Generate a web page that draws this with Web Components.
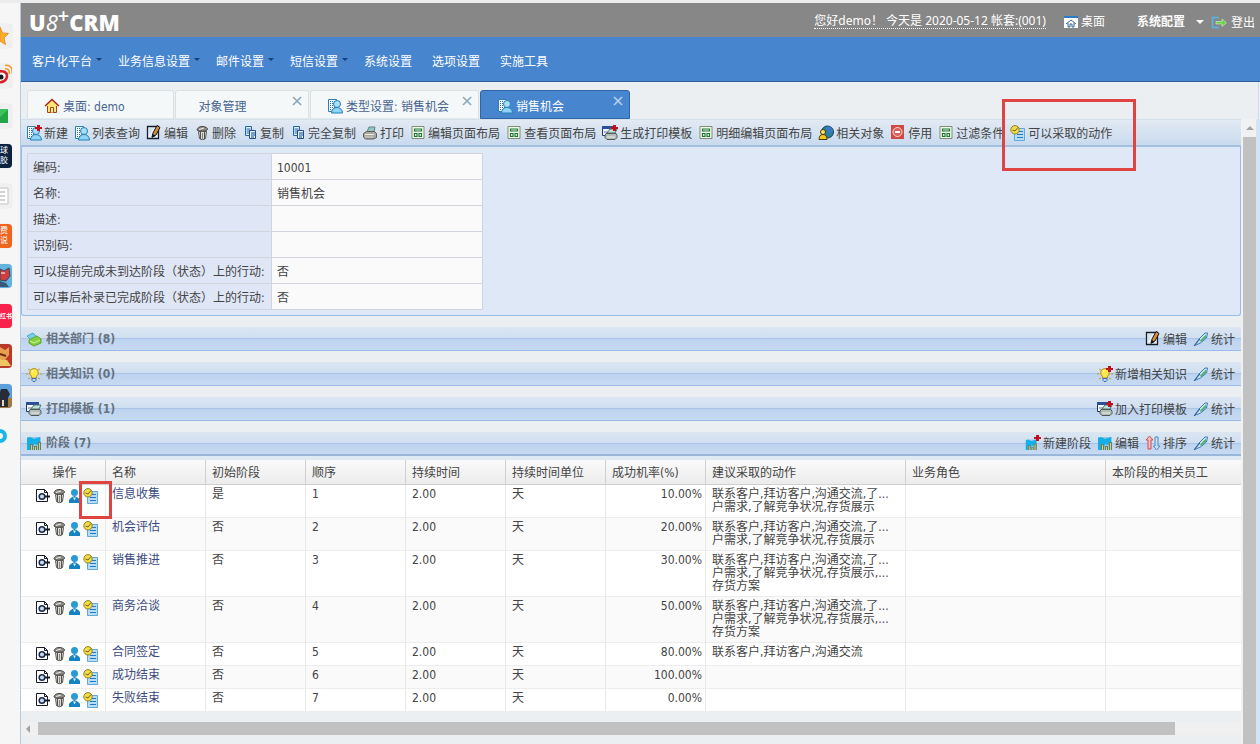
<!DOCTYPE html>
<html lang="zh-CN">
<head>
<meta charset="utf-8">
<title>U8+ CRM - 销售机会</title>
<style>
  html { background: #fff; }
  body {
    margin: 0;
    color: #444;
    font: 12px/16px "DejaVu Sans Condensed", "Noto Sans CJK SC", "Liberation Sans", sans-serif;
  }
</style>
</head>
<body>
<crm-app>
  <side-dock slot="dock"></side-dock>
  <crm-header slot="top"></crm-header>
  <crm-nav slot="top"></crm-nav>
  <crm-tabs slot="top"></crm-tabs>

  <tool-bar>
    <tool-item icon="new">新建</tool-item>
    <tool-item icon="list">列表查询</tool-item>
    <tool-item icon="edit">编辑</tool-item>
    <tool-item icon="trash">删除</tool-item>
    <tool-item icon="copy">复制</tool-item>
    <tool-item icon="copy">完全复制</tool-item>
    <tool-item icon="print">打印</tool-item>
    <tool-item icon="layout">编辑页面布局</tool-item>
    <tool-item icon="layout">查看页面布局</tool-item>
    <tool-item icon="tplnew">生成打印模板</tool-item>
    <tool-item icon="layout">明细编辑页面布局</tool-item>
    <tool-item icon="related">相关对象</tool-item>
    <tool-item icon="stop">停用</tool-item>
    <tool-item icon="layout">过滤条件</tool-item>
    <tool-item icon="action" marked>可以采取的动作</tool-item>
  </tool-bar>
  <detail-panel></detail-panel>
  <section-bar icon="dept" label="相关部门 (8)">
    <tool-item icon="edit">编辑</tool-item>
    <tool-item icon="pen">统计</tool-item>
  </section-bar>
  <section-bar icon="bulb" label="相关知识 (0)">
    <tool-item icon="bulbnew">新增相关知识</tool-item>
    <tool-item icon="pen">统计</tool-item>
  </section-bar>
  <section-bar icon="tpl" label="打印模板 (1)">
    <tool-item icon="tplnew">加入打印模板</tool-item>
    <tool-item icon="pen">统计</tool-item>
  </section-bar>
  <section-bar icon="chart" label="阶段 (7)" open>
    <tool-item icon="chartnew">新建阶段</tool-item>
    <tool-item icon="chart">编辑</tool-item>
    <tool-item icon="sort">排序</tool-item>
    <tool-item icon="pen">统计</tool-item>
  </section-bar>
  <stage-grid></stage-grid>
  <h-scroll></h-scroll>
</crm-app>

<script>
const building = `<path d="M1.500 1.500h8v12h-8z" fill="#f4fafd" stroke="#2f7db5"/><path d="M3.500 3v9M5.500 3v9M7.500 3v9" stroke="#2f6d9d" stroke-dasharray="1 1"/>`;
const person = `<path d="M4.500 15c0-3 2-5.500 5.500-5.500s5.500 2.500 5.500 5.500z" fill="#8fd4f4" stroke="#2480ba"/><circle cx="10" cy="6" r="3.500" fill="#a8def6" stroke="#2480ba"/>`;
const plus = `<path d="M11 0h3v2h2v2h-2v2h-3V4H9V2h2z" fill="#c01020"/>`;
const printer = `<path d="M5 8l3-4h7l-2 4z" fill="#b9e4d8" stroke="#52716e"/><path d="M4 8.500h10l1 2v2l-2 2H5l-2-2v-2z" fill="#b4bcb8" stroke="#505956"/><path d="M5 12h8" stroke="#e8efec"/>`;
const windowShape = `<path d="M.5 1.500h12v9H.5z" fill="#f2f5f8" stroke="#1d3566"/><path d="M0 1h13v3H0z" fill="#2c4f9c"/><path d="M2 7h4" stroke="#6a7b98"/>`;
const bulb = `<path d="M0 8h2M14 8h2M2 3l2 1M14 3l-2 1M2 13l2-1M14 13l-2-1" stroke="#c79a28"/><path d="M8 2.500a4.300 4.300 0 0 0-2.500 7.800V12h5v-1.700A4.300 4.300 0 0 0 8 2.500z" fill="#ffe84a" stroke="#b48a15"/><path d="M6 12.500h4v2l-1 1H7l-1-1z" fill="#bcd9f4" stroke="#3b6cb5"/><path d="M7 4.500L6 6" stroke="#fff"/>`;
const chart = `<path d="M1 2h14v13H1z" fill="#8fc6e6"/><path d="M1 3l3-1 4 2 6-2v6l-3 2-3-1-2 6H1z" fill="#14aee8"/><path d="M4 9h3v6H4zM8 11h3v4H8zM12 7h3v8h-3z" fill="#6f7c58"/><path d="M5.500 10v5M9.500 12v3M13.500 8v7" stroke="#cfd07a"/>`;
const ICONS = {
  new: building + person + plus,
  list: building + person,
  edit: `<path d="M1.500 1.500h11v12h-11z" fill="#e8f2fa" stroke="#151f2b" stroke-width="1.300"/><path d="M3 4h4M3 6h3M3 8h2" stroke="#c5d2dc"/><path d="M6 12l1-4 4-7.500 3 2L10 10z" fill="#d58a3c" stroke="#16181a"/><path d="M5.500 13l1.500-4 2.500 2z" fill="#111"/>`,
  trash: `<path d="M3 5c0-2 3-4 6-3.500S14 3 13.500 4.500 5 7 3 5z" fill="#8e8c86" stroke="#494743"/><path d="M4.500 6.500h8l-1 7c-2 1.500-4 1.500-6 0z" fill="#dddbd5" stroke="#5a5854"/><path d="M6.500 7v7M10.500 7v7" stroke="#55534e"/><path d="M8.500 8v6" stroke="#8b8983"/><path d="M5 4.500l5-1.500" stroke="#eee"/>`,
  copy: `<path d="M3.500 1.500h6v9h-6z" fill="#e4f0fa" stroke="#2463a6"/><path d="M4.500 4h4M4.500 6h4M4.500 8h3" stroke="#2463a6"/><path d="M7.500 5.500h6v8h-6z" fill="#e4f0fa" stroke="#1d4f8c"/><path d="M9 8h4M9 10h4M9 12h3" stroke="#1d4f8c"/>`,
  print: `<path d="M5 7l2-5h6l-1 5z" fill="#8ec8c2" stroke="#6b807e"/><path d="M1.500 8.500l3-2h8l2 2v4l-3 1.500H3.500l-2-2z" fill="#a9a79e" stroke="#5c5b55"/><path d="M3 9.500h9" stroke="#efeee8"/><path d="M3 12h8" stroke="#d5d4cd"/>`,
  layout: `<path d="M2 1.500h12v12H2z" fill="#f4f8ea" stroke="#7d8f78"/><path d="M4.500 4h7v2h-7zM4.500 8.500h2.500v3h-2.500zM9 8.500h2.500v3H9z" fill="#e3f2d4" stroke="#1f7a3a" stroke-width="1.200"/>`,
  tpl: windowShape + printer,
  tplnew: windowShape + printer + plus,
  related: `<circle cx="9.500" cy="7" r="6" fill="#2a7f9a" stroke="#123d5c"/><path d="M10 1c4 1 5 4 5 6l-4 1-3-4z" fill="#3f78c8"/><circle cx="5" cy="7" r="2.500" fill="#ffe169" stroke="#493b0a"/><path d="M1 14.500c0-3 1-5 4-5s4 2 4 5z" fill="#f9c51f" stroke="#493b0a"/>`,
  stop: `<path d="M1 0h13v14H1z" fill="#cf4a44"/><circle cx="7.500" cy="7" r="4.500" fill="#d9625a" stroke="#f7dcd9"/><path d="M5 7h5" stroke="#fff" stroke-width="2"/>`,
  action: `<path d="M4.500 3.500h10v12h-10z" fill="#b5ddf8" stroke="#62a8da"/><path d="M9 6.500h4M7 9.500h6M7 12.500h6" stroke="#2478bd"/><circle cx="5" cy="4.800" r="4.200" fill="#f3dc46" stroke="#8d7f28"/><path d="M2.500 5l2.500 1 3-3.500" fill="none" stroke="#6f6418"/>`,
  dept: `<path d="M1 5l6-3 4 4-5 4z" fill="#79cfe6" stroke="#58a9c0"/><path d="M3 9l8-4 4 3v4l-7 3-5-3z" fill="#84d03d" stroke="#5ca32a"/><path d="M4 10l4 2 6-3" stroke="#d4f09e"/>`,
  bulb: bulb,
  bulbnew: bulb + plus,
  chart: chart,
  chartnew: `<g transform="translate(0 3) scale(.8)">${chart}</g>` + plus,
  pen: `<path d="M1.500 14.500L6 8l6-6 2.500 0-1 5-6 5z" fill="#cfe9e4" stroke="#3f78b8"/><path d="M7 9.500l6-6v3l-5 5z" fill="#55ad80"/><path d="M1 15l6-7" stroke="#26599c"/>`,
  sort: `<path d="M4.500 1L8 5H6v9H3V5H1z" fill="#f6bcbc" stroke="#cf4d55"/><path d="M11.500 15L8.500 11H10V2h3v9h2z" fill="#c6dff3" stroke="#4f8cc0"/>`,
  view: `<path d="M1.500 1.500h8l3 3v9h-11z" fill="#fff" stroke="#151b28"/><path d="M9.500 1.500v3h3" fill="none" stroke="#151b28"/><circle cx="7" cy="8.500" r="2.800" fill="#c4ddf6" stroke="#1d2848" stroke-width="1.500"/><path d="M10 8.500h5" stroke="#151b28" stroke-width="2"/>`,
  user: `<circle cx="7.500" cy="4.500" r="3.500" fill="#2a9ad6"/><path d="M2 15v-3c1-2 3-3 5.500-4 2.500 1 4.500 2 5.500 4v3z" fill="#1583c3"/><path d="M6 9.500h3l-1.500 3z" fill="#d8f0fc"/>`,
  home: `<path d="M3.500 8v6.500h9V8" fill="#ffe375" stroke="#a04414"/><path d="M1 8l7-6.500L15 8" fill="#ffe375" stroke="#a3271a" stroke-width="1.500"/><path d="M6.500 14.500v-5h3v5" fill="#fff3b5" stroke="#a04414"/>`,
  desk: `<path d="M1 2h14v12H1z" fill="#fff"/><path d="M1 2h14v2H1z" fill="#2d7bc4"/><path d="M3 10l5-4 5 4M5 9v4h2v-3h2v3h2V9" fill="none" stroke="#33679c"/>`,
  exit: `<path d="M8 2.500H1.500v10H8" fill="none" stroke="#55b7e8" stroke-width="1.500"/><path d="M5 6.500h6V4l4.500 3.800L11 11.500V9H5z" fill="#6fd24a" stroke="#e7ffe0" stroke-width=".5"/>`,
  star: `<path d="M0 3l2.500 6 6 .5-4.500 4.500 1.500 6.500L0 17z" fill="#fcae2c" stroke="#ef9120"/>`,
  weibo: `<path d="M-2 8c5-2 9 0 9 4s-4 7-9 6" fill="#fff" stroke="#d8232a" stroke-width="2.500"/><circle cx="1" cy="13" r="2.500" fill="#181818"/><path d="M5 5c3-1 5 2 4 5M5 1.500c5-1 8 3 7 8" fill="none" stroke="#f09a2c" stroke-width="1.500"/>`,
  mail: `<path d="M0 5h8v14H0z" fill="#3fc25c"/><path d="M0 13l8-7v13H0z" fill="#26a548"/>`,
  doc: `<path d="M-1 4h9v16h-9z" fill="#fff" stroke="#c4c4c4"/><path d="M0 8h5M0 12h5M0 16h5" stroke="#a8a8a8"/>`,
  robot: `<path d="M0 0h12v24H0z" fill="#62b4de"/><path d="M0 5l4 2 5-3 1 8-4 5-6-1z" fill="#cf3e40" stroke="#30485a"/><path d="M0 17l6 2 3 4H0z" fill="#385a78"/><path d="M1 9h4" stroke="#fff"/>`,
  clash: `<path d="M0 0h12v24H0z" fill="#b9392a"/><path d="M0 3l5 3 4-3v8l-4 5-5-1z" fill="#e9a04c"/><path d="M0 15l7 1 4 6H0z" fill="#edc562"/><path d="M0 10l6 2" stroke="#6e2a18" stroke-width="2"/>`,
  hero: `<path d="M0 0h12v24H0z" fill="#5aa0dc"/><path d="M0 14h12v10H0z" fill="#a27b3e"/><path d="M1 5h6l3 5-2 4v9H0V8z" fill="#282c38"/><path d="M3 16v6" stroke="#e8d7b0" stroke-width="2"/>`,
  ring: `<path d="M0 7a5 5 0 0 1 0 10" fill="none" stroke="#19b7e8" stroke-width="4"/>`
};

function define(name, render) {
  customElements.define(name, class extends HTMLElement {
    constructor() { super(); this.attachShadow({ mode: "open" }); }
    connectedCallback() {
      const template = document.createElement("template");
      template.innerHTML = render(this);
      this.shadowRoot.replaceChildren(template.content.cloneNode(true));
    }
  });
}

define("crm-icon", el => {
  const tall = el.hasAttribute("tall");
  const w = tall ? 12 : 16, h = tall ? 24 : 16;
  return `<style>:host{display:block;flex:none;width:${w}px;height:${h}px}svg{display:block}</style>
  <svg width="${w}" height="${h}" viewBox="0 0 ${w} ${h}" fill="none" aria-hidden="true">${ICONS[el.getAttribute("name")]}</svg>`;
});

define("crm-app", () => `<style>
  :host{display:grid;grid-template-columns:20px minmax(0,1fr);min-height:100vh;box-sizing:border-box;border-top:3px solid #ececec;background:#f6f6f6}
  main{display:flex;flex-direction:column;border-left:1px solid #b5c8dc;background:#ebeff2;min-width:0}
  .body{flex:1;display:flex;min-width:0}
  .content{flex:1;min-width:0}
</style>
<slot name="dock"></slot>
<main>
  <slot name="top"></slot>
  <div class="body">
    <div class="content"><slot></slot></div>
    <v-scroll></v-scroll>
  </div>
</main>`);

define("side-dock", () => `<style>
  :host{display:flex;flex-direction:column;gap:16px;padding-top:21px;box-sizing:border-box}
  .tile{width:12px;height:24px;border-radius:0 4px 4px 0;overflow:hidden;background:#f0f0f0;box-shadow:0 0 1px #ccc;
    display:flex;flex-direction:column;justify-content:center;color:#fff;font-size:8px;line-height:10px;white-space:nowrap}
  .navy{background:#0d2342}.orange{background:#f1641e}.red{background:#f7234a;font-size:6px;font-weight:bold}
  .bare{background:none;box-shadow:none}
</style>
<div class="tile"><crm-icon name="star" tall></crm-icon></div>
<div class="tile"><crm-icon name="weibo" tall></crm-icon></div>
<div class="tile"><crm-icon name="mail" tall></crm-icon></div>
<div class="tile navy"><span>球</span><span>胶</span></div>
<div class="tile"><crm-icon name="doc" tall></crm-icon></div>
<div class="tile orange"><span>费</span><span>说</span></div>
<div class="tile"><crm-icon name="robot" tall></crm-icon></div>
<div class="tile red"><span>红书</span></div>
<div class="tile"><crm-icon name="clash" tall></crm-icon></div>
<div class="tile"><crm-icon name="hero" tall></crm-icon></div>
<div class="tile bare"><crm-icon name="ring" tall></crm-icon></div>`);

define("crm-header", () => `<style>
  :host{display:flex;align-items:center;box-sizing:border-box;height:34px;background:#878787;color:#fff;padding:3px 5px 0 8px;white-space:nowrap}
  .logo{flex:1;display:flex;font:800 22px/24px "Open Sans","Noto Sans",sans-serif}
  .logo .eight{font-weight:400;font-style:italic}
  .logo sup{font-size:20px;line-height:12px;font-weight:600}
  a{color:#fff;text-decoration:none;display:flex;align-items:center;gap:2px}
  .hello{font-family:"Noto Sans","Noto Sans CJK SC",sans-serif;border-bottom:1px dotted #fff;line-height:14px;margin-right:17px}
  .desk{margin-right:32px}
  .exit{gap:4px;padding-top:2px}
  button{all:unset;font-weight:bold;display:flex;align-items:center;gap:11px;margin-right:7px}
  button::after{content:"";border:4px solid transparent;border-top-color:#fff;border-bottom:0}
</style>
<div class="logo"><span>U</span><span class="eight">8</span><sup>+</sup><span>CRM</span></div>
<a class="hello" href="#">您好demo！ 今天是 2020-05-12 帐套:(001)</a>
<a class="desk" href="#"><crm-icon name="desk"></crm-icon>桌面</a>
<button type="button">系统配置</button>
<a class="exit" href="#"><crm-icon name="exit"></crm-icon>登出</a>`);

define("crm-nav", () => {
  const items = [["客户化平台", 1], ["业务信息设置", 1], ["邮件设置", 1], ["短信设置", 1], ["系统设置"], ["选项设置"], ["实施工具"]];
  return `<style>
  :host{display:block;background:#4785ce;border-bottom:1px solid #2c5f9e}
  nav{display:flex;align-items:center;height:44px;padding:0 11px;color:#fff;white-space:nowrap}
  button{all:unset;display:flex;align-items:center;margin-right:20px;padding-top:5px}
  .more{margin-right:16px}
  .more::after{content:"";margin:-4px 0 0 4px;border:3px solid transparent;border-top-color:#173f78;border-bottom:0}
</style><nav>${items.map(([t, m]) => `<button type="button" class="${m ? "more" : ""}">${t}</button>`).join("")}</nav>`;
});

define("crm-tabs", () => {
  const tabs = [
    ["home", "桌面: demo", 147, 0], ["", "对象管理", 134, 1],
    ["list", "类型设置: 销售机会", 169, 1], ["list", "销售机会", 150, 1, "on"]];
  return `<style>
  :host{display:flex;gap:1px;padding:8px 0 0 6px;height:29px;background:#ebeff2;border-right:1px solid #c9dcf0;margin-right:1px}
  .tab{position:relative;box-sizing:border-box;height:29px;display:flex;align-items:center;padding:3px 15px 0 16px;
    background:#f5f8f8;border:1px solid #dbe1e1;border-bottom-color:#e3e9ee;border-radius:3px 3px 0 0;color:#47658f;white-space:nowrap}
  .label{all:unset;display:flex;align-items:center;gap:3px}
  .label span{padding-top:2px}
  .on{background:#4785ce;border-color:#2c65a8;color:#fff}
  .close{all:unset;position:absolute;right:3px;top:2px;width:16px;height:16px;text-align:center;font:16px/16px "DejaVu Sans",sans-serif;color:#87a5bc}
  .on .close{color:#b8d4ee}
</style>${tabs.map(([i, t, w, c, on]) => `<div class="tab ${on || ""}" style="width:${w}px">
  <button type="button" class="label">${i ? `<crm-icon name="${i}"></crm-icon>` : "&nbsp;"}<span>${t}</span></button>
  ${c ? `<button type="button" class="close" aria-label="关闭">×</button>` : ""}</div>`).join("")}`;
});

define("tool-bar", () => `<style>
  :host{display:flex;align-items:center;box-sizing:border-box;height:28px;padding-left:5px;white-space:nowrap;
    background:linear-gradient(#e2eaf3,#c9daee);border-top:1px solid #d3dfe9;border-bottom:2px solid #a3bfdf}
</style><slot></slot>`);

define("tool-item", el => `<style>
  :host{display:block;flex:none;position:relative}
  button{all:unset;display:flex;align-items:center;gap:2px;padding-right:6px;line-height:16px;white-space:nowrap;color:#444}
  span{padding-top:2px}
  .mark{position:absolute;left:-8px;right:-18px;top:-25px;height:66px;border:3px solid #dd4442;pointer-events:none;z-index:2}
</style><button type="button"><crm-icon name="${el.getAttribute("icon")}"></crm-icon><span><slot></slot></span></button>
${el.hasAttribute("marked") ? `<div class="mark"></div>` : ""}`);

define("detail-panel", () => {
  const rows = [["编码:", "10001"], ["名称:", "销售机会"], ["描述:", ""], ["识别码:", ""],
    ["可以提前完成未到达阶段（状态）上的行动:", "否"], ["可以事后补录已完成阶段（状态）上的行动:", "否"]];
  return `<style>
  :host{display:block;box-sizing:border-box;padding:6px 5px 5px;background:#dfe8f6;border:1px solid #99bbe8;border-top:0;border-radius:0 0 3px 3px}
  table{border-collapse:collapse;table-layout:fixed;width:456px}
  th,td{border:1px solid #d0d4dc;height:26px;padding:2px 5px 0;text-align:left;font-weight:normal;box-sizing:border-box;white-space:nowrap}
  th{width:244px;background:#dfe6f6}
  td{background:#fafafa}
</style><table>${rows.map(([a, b]) => `<tr><th scope="row">${a}</th><td>${b}</td></tr>`).join("")}</table>`;
});

define("section-bar", el => `<style>
  :host{display:block;margin-top:11px}
  header{display:flex;align-items:center;box-sizing:border-box;height:24px;padding-left:5px;border-bottom:1px solid #99bbe8;
    background:linear-gradient(#dce6f2 0,#cfdff1 11px,#a9c4e6 11px,#a9c4e6 12px,#bdd3ef 12px,#c8daf3 100%)}
  :host([open]) header{border-bottom:2px solid #9ab7da}
  .gap{height:4px;background:#dfe9f4}
  h2{flex:1;margin:0;padding-left:4px;font-size:12px;line-height:16px;color:#66727e}
  .actions{display:flex;border-right:1px solid #99bbe8;margin-right:-1px}
</style><header><crm-icon name="${el.getAttribute("icon")}"></crm-icon><h2>${el.getAttribute("label")}</h2><div class="actions"><slot></slot></div></header>
${el.hasAttribute("open") ? `<div class="gap"></div>` : ""}`);

define("stage-grid", () => {
  const two = "联系客户,拜访客户,沟通交流,了...<br>户需求,了解竞争状况,存货展示";
  const three = two + ",...<br>存货方案";
  const rows = [["信息收集", "是", "10.00%", two], ["机会评估", "否", "20.00%", two], ["销售推进", "否", "30.00%", three],
    ["商务洽谈", "否", "50.00%", three], ["合同签定", "否", "80.00%", "联系客户,拜访客户,沟通交流"], ["成功结束", "否", "100.00%", ""], ["失败结束", "否", "0.00%", ""]];
  const heads = ["操作", "名称", "初始阶段", "顺序", "持续时间", "持续时间单位", "成功机率(%)", "建议采取的动作", "业务角色", "本阶段的相关员工"];
  return `<style>
  :host{display:block}
  table{width:100%;table-layout:fixed;border-spacing:0;border-collapse:separate;background:#fff}
  th{box-sizing:border-box;height:25px;padding:2px 6px 0;text-align:left;font-weight:normal;white-space:nowrap;
    background:linear-gradient(#fafafa,#ececec);border-right:1px solid #d0d0d0;border-bottom:1px solid #d0d0d0}
  th:first-child{text-align:center;padding-left:9px}
  th:last-child,td:last-child{border-right:0}
  td{padding:3px 3px 3px 6px;line-height:13px;vertical-align:top;border-right:1px solid #e6eae6;border-bottom:1px solid #ededed;white-space:nowrap}
  tr:nth-child(even) td{background:#fafafa}
  .num{text-align:right}
  td.ops{position:relative;padding-left:14px}
  .icons{display:flex}
  .icons button{all:unset}
  a{color:#3c4c80;text-decoration:none}
  .mark{position:absolute;right:-7px;top:-4px;width:27px;height:32px;border:3px solid #dd4442;z-index:2;pointer-events:none}
  .c0{width:85px}.c1{width:100px}.c2{width:200px}
</style><table><colgroup><col class="c0">${'<col class="c1">'.repeat(6)}<col class="c2"><col class="c2"><col></colgroup>
<thead><tr>${heads.map(h => `<th scope="col">${h}</th>`).join("")}</tr></thead>
<tbody>${rows.map(([n, s, p, a], i) => `<tr><td class="ops"><div class="icons">${[["view", "查看"], ["trash", "删除"], ["user", "员工"], ["action", "动作"]].map(([k, l]) =>
    `<button type="button" aria-label="${l}"><crm-icon name="${k}"></crm-icon></button>`).join("")}</div>${i ? "" : '<div class="mark"></div>'}</td>
  <td><a href="#">${n}</a></td><td>${s}</td><td>${i + 1}</td><td>2.00</td><td>天</td><td class="num">${p}</td><td>${a}</td><td></td><td></td></tr>`).join("")}</tbody></table>`;
});

define("h-scroll", () => `<style>
  :host{display:flex;align-items:center;height:13px;margin:10px 0;background:#f0f0f0}
  .arrow{width:0;margin:0 8px 0 5px;border:4px solid transparent;border-right-color:#a3a3a3;border-left:0}
  .thumb{flex:1;margin-right:66px;height:13px;background:#c1c1c1}
</style><div class="arrow"></div><div class="thumb"></div>`);

define("v-scroll", () => `<style>
  :host{display:flex;flex-direction:column;width:13px;background:#f1f1f1;border-right:4px solid #d6e3f2;border-left:2px solid #f1f1f1;box-sizing:content-box}
  .arrow{align-self:center;margin:7px 0;border:4px solid transparent;border-bottom-color:#a3a3a3;border-top:0}
  .thumb{flex:1;background:#c1c1c1}
</style><div class="arrow"></div><div class="thumb"></div>`);
</script>
</body>
</html>
